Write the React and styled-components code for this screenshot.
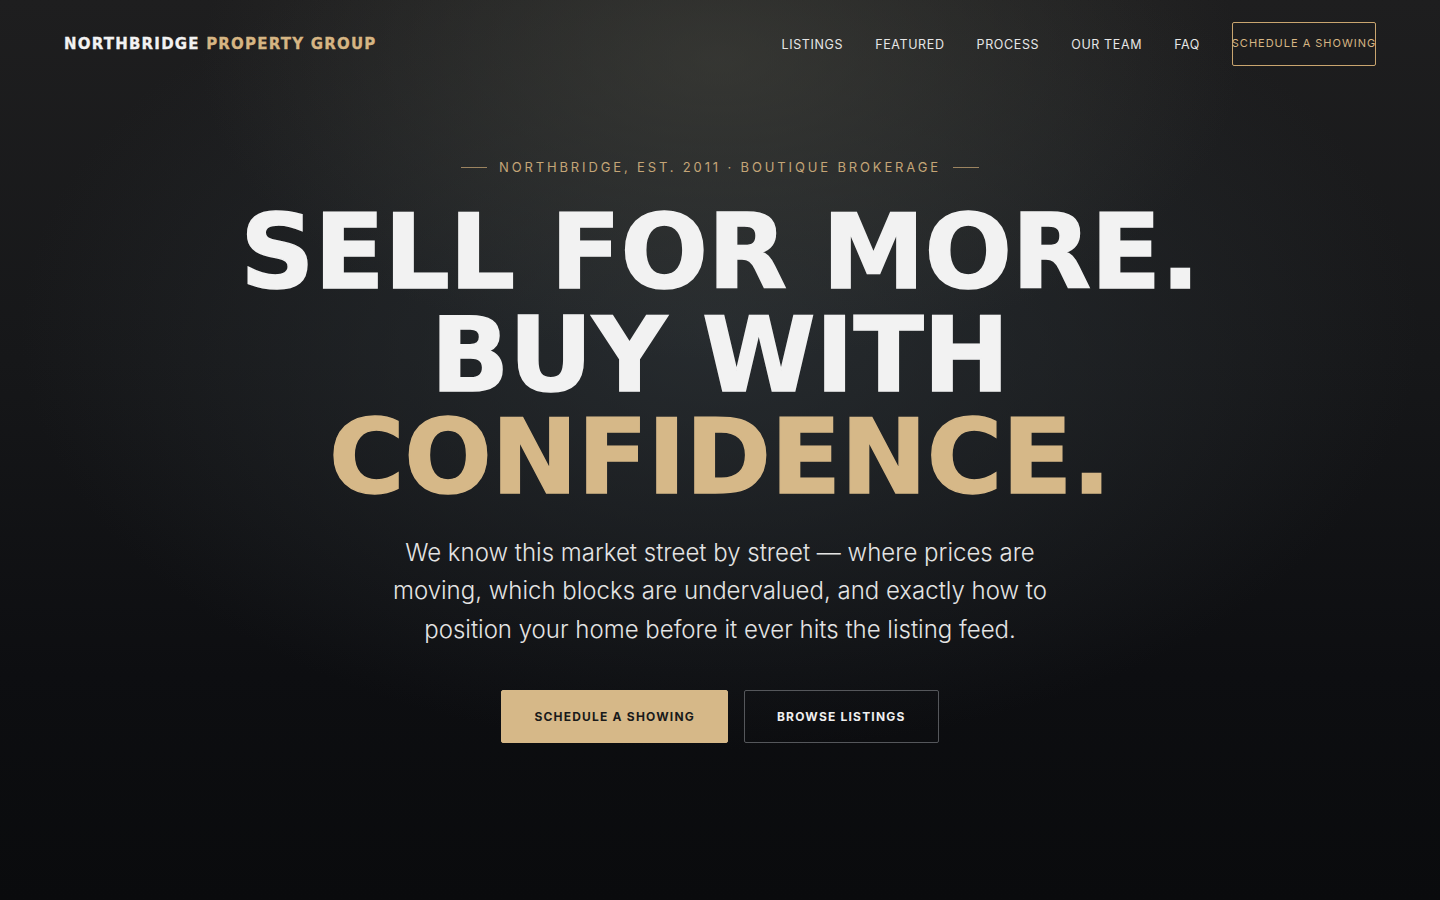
import React from "react";
import styled, { createGlobalStyle } from "styled-components";

const Global = createGlobalStyle`
  html, body { margin: 0; padding: 0; }
  body {
    background: #0b0c0e;
    font-family: Inter, "Noto Sans", sans-serif;
    -webkit-font-smoothing: antialiased;
  }
  * { box-sizing: border-box; }
`;

const Page = styled.div`
  min-height: 900px;
  width: 100%;
  display: flex;
  flex-direction: column;
  background:
    radial-gradient(ellipse 520px 300px at 50% 60px, rgba(70,70,62,0.55), rgba(70,70,62,0) 100%),
    radial-gradient(ellipse 700px 420px at 50% 330px, rgba(44,50,54,0.75), rgba(44,50,54,0) 100%),
    linear-gradient(180deg, #1e1e1f 0%, #161719 40%, #0d0e11 75%, #0a0b0d 100%);
`;

const Header = styled.header`
  height: 88px;
  padding: 0 64px;
  display: flex;
  align-items: center;
  justify-content: space-between;
`;

const Logo = styled.div`
  font-family: "DejaVu Sans", sans-serif;
  font-weight: 700;
  font-size: 15px;
  letter-spacing: 1.2px;
  color: #f2f2f2;
  -webkit-text-stroke: 0.3px currentColor;
`;

const Gold = styled.span`
  color: #d6b583;
`;

const Nav = styled.nav`
  display: flex;
  align-items: center;
  gap: 32px;
`;

const NavLink = styled.a`
  font-size: 12.5px;
  letter-spacing: 0.05em;
  color: #e6e6e6;
  text-decoration: none;
  text-transform: uppercase;
`;

const NavButton = styled.a`
  height: 44px;
  width: 144px;
  display: flex;
  align-items: center;
  justify-content: center;
  border: 1px solid #c9a56f;
  border-radius: 2px;
  color: #d6b583;
  font-size: 11px;
  letter-spacing: 0.09em;
  text-decoration: none;
  white-space: nowrap;
  padding-bottom: 2px;
`;

const Hero = styled.main`
  display: flex;
  flex-direction: column;
  align-items: center;
  padding-top: 71px;
`;

const Eyebrow = styled.div`
  display: flex;
  align-items: center;
  gap: 12px;
  color: #c4a577;
  font-size: 13px;
  letter-spacing: 0.22em;
  text-transform: uppercase;
`;

const Rule = styled.span`
  width: 26px;
  height: 1px;
  background: #9c8460;
`;

const Headline = styled.h1`
  margin: 26px 0 0;
  font-family: "DejaVu Sans", sans-serif;
  font-weight: 700;
  font-size: 103px;
  line-height: 102.5px;
  letter-spacing: -0.3px;
  text-align: center;
  color: #f2f2f2;
  -webkit-text-stroke: 1.5px currentColor;
  text-transform: uppercase;
`;

const Line = styled.span`
  display: block;
  color: ${(p) => (p.$gold ? "#d6b888" : "#f2f2f2")};
`;

const Lede = styled.p`
  margin: 25px 0 0;
  max-width: 700px;
  font-size: 24px;
  font-weight: 300;
  line-height: 38.5px;
  color: #e4e4e4;
  text-align: center;
`;

const Actions = styled.div`
  display: flex;
  gap: 16px;
  margin-top: 41px;
`;

const Button = styled.a`
  height: 53px;
  padding: 0 32px;
  display: flex;
  align-items: center;
  justify-content: center;
  border-radius: 2px;
  font-size: 12px;
  font-weight: 700;
  letter-spacing: 0.1em;
  text-transform: uppercase;
  text-decoration: none;
  background: ${(p) => (p.$primary ? "#d6b888" : "transparent")};
  color: ${(p) => (p.$primary ? "#1a1a1a" : "#f0f0f0")};
  border: 1px solid ${(p) => (p.$primary ? "#d6b888" : "#55575b")};
`;

export default function App() {
  return (
    <Page>
      <Global />
      <Header>
        <Logo>
          NORTHBRIDGE <Gold>PROPERTY GROUP</Gold>
        </Logo>
        <Nav>
          <NavLink href="#">Listings</NavLink>
          <NavLink href="#">Featured</NavLink>
          <NavLink href="#">Process</NavLink>
          <NavLink href="#">Our Team</NavLink>
          <NavLink href="#">FAQ</NavLink>
          <NavButton href="#">SCHEDULE A SHOWING</NavButton>
        </Nav>
      </Header>
      <Hero>
        <Eyebrow>
          <Rule />
          Northbridge, Est. 2011 · Boutique Brokerage
          <Rule />
        </Eyebrow>
        <Headline>
          <Line>Sell for more.</Line>
          <Line>Buy with</Line>
          <Line $gold>Confidence.</Line>
        </Headline>
        <Lede>
          We know this market street by street — where prices are moving, which
          blocks are undervalued, and exactly how to position your home before it
          ever hits the listing feed.
        </Lede>
        <Actions>
          <Button $primary href="#">Schedule a Showing</Button>
          <Button href="#">Browse Listings</Button>
        </Actions>
      </Hero>
    </Page>
  );
}
